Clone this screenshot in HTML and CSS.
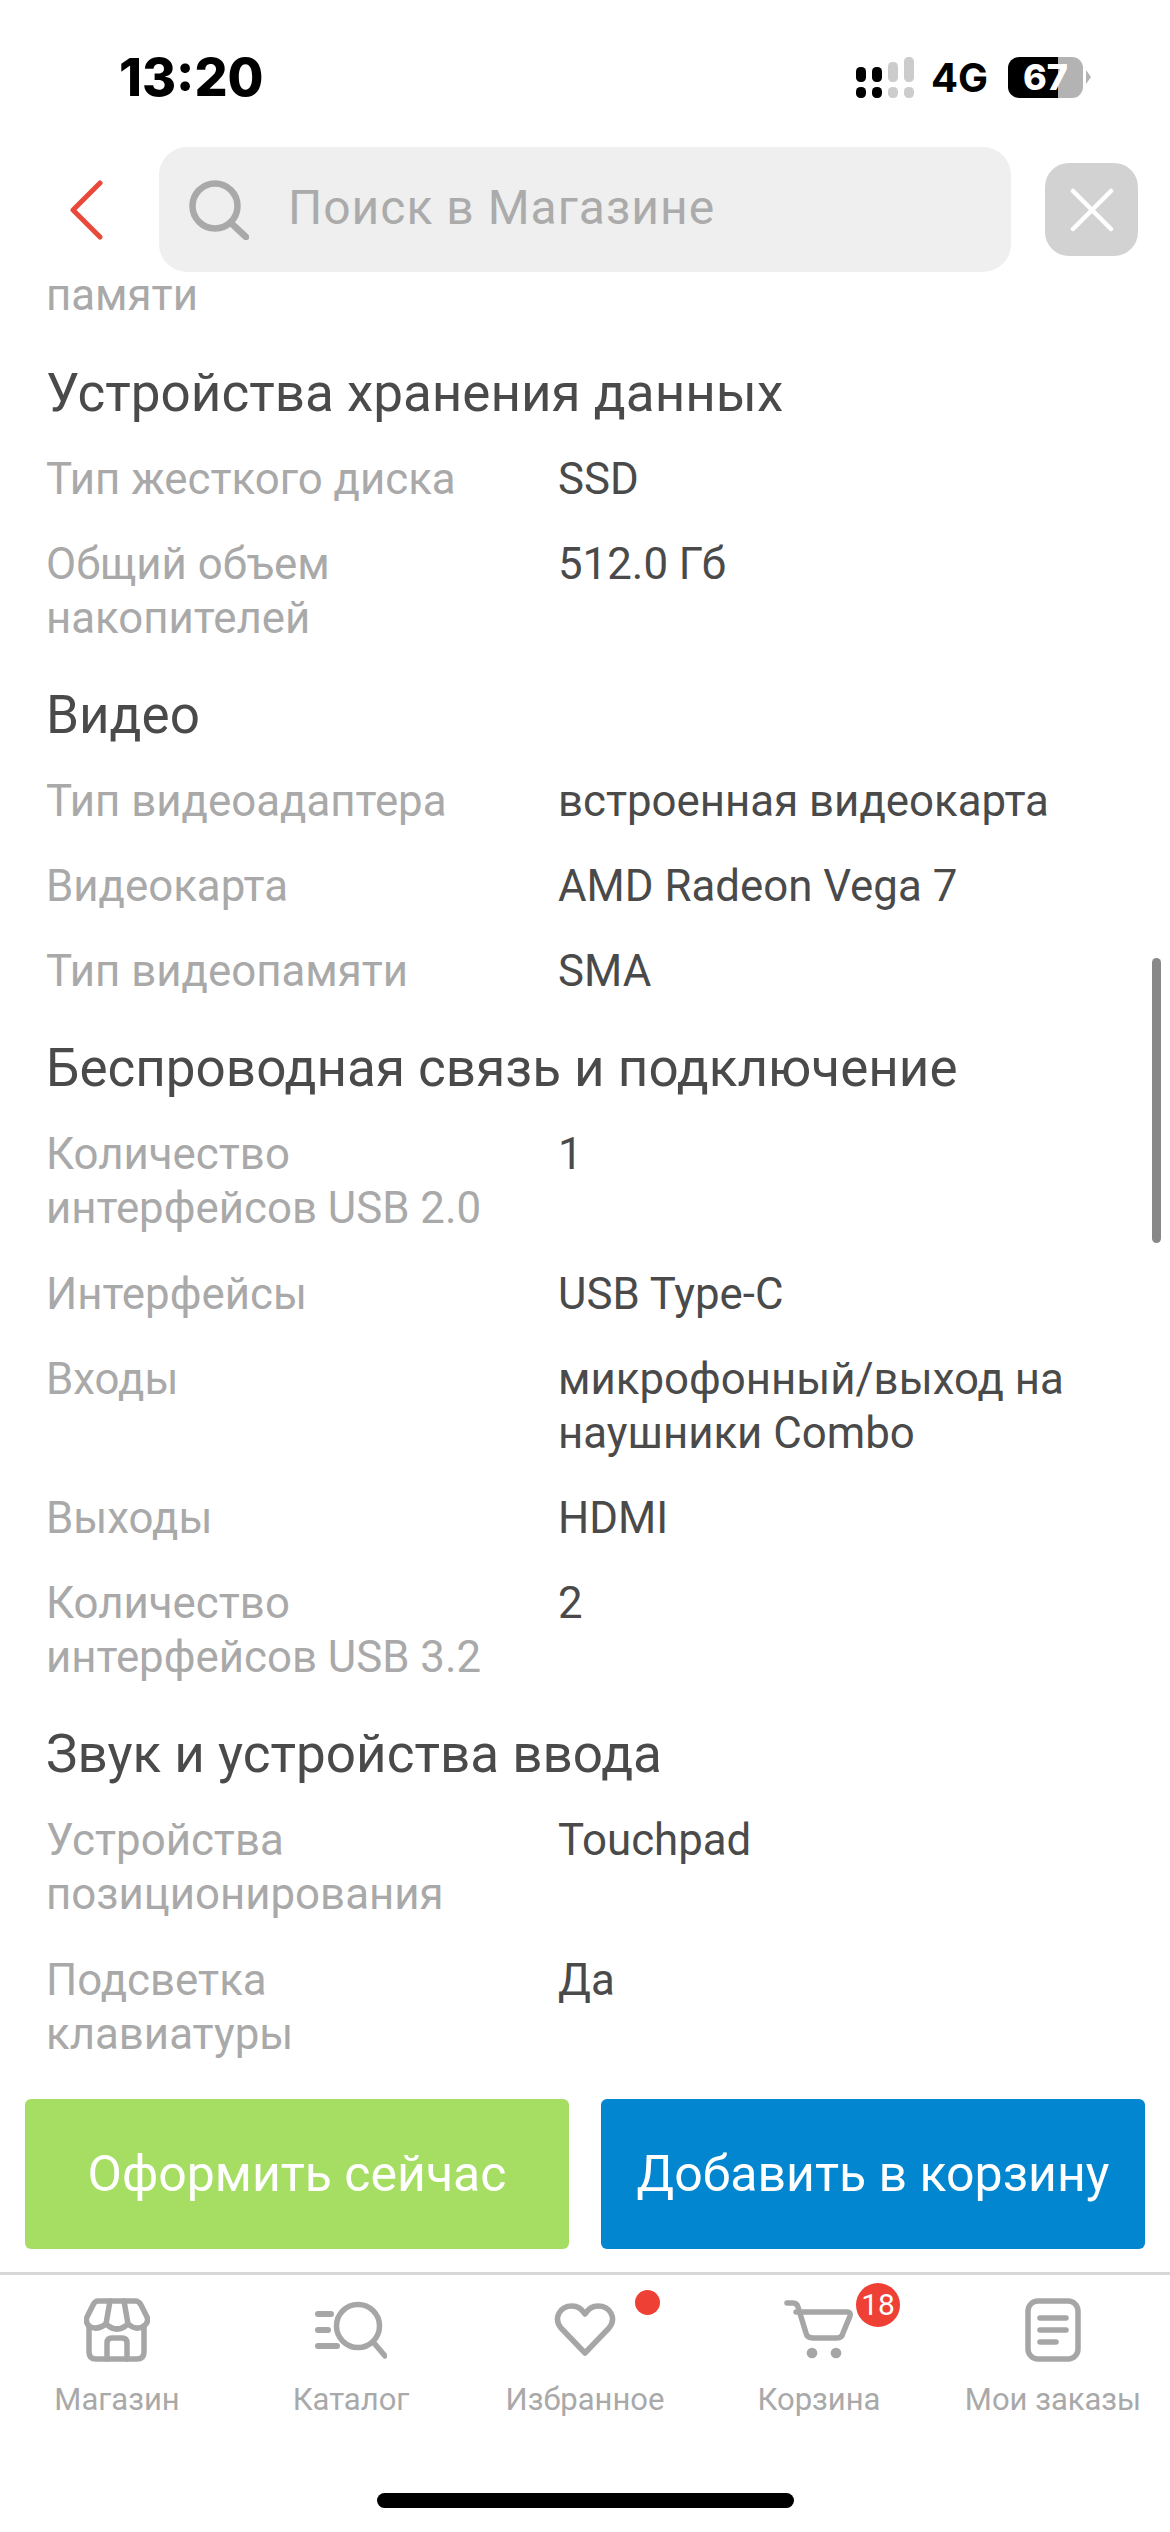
FILE: index.html
```html
<!DOCTYPE html>
<html lang="ru">
<head>
<meta charset="utf-8">
<title>Характеристики</title>
<link rel="stylesheet" href="styles.css">
</head>
<body>
<div class="phone">
  <header class="top">
    <div class="status">
      <span class="time">13:20</span>
      <div class="status-right">
        <svg class="signal" width="58" height="41" viewBox="0 0 58 41">
          <rect x="0" y="10" width="10" height="15" rx="4.5" fill="#000"/>
          <rect x="16" y="10" width="10" height="15" rx="4.5" fill="#000"/>
          <rect x="32" y="5" width="10" height="20" rx="4.5" fill="#ccc"/>
          <rect x="48" y="0" width="10" height="25" rx="4.5" fill="#ccc"/>
          <rect x="0" y="30" width="10" height="11" rx="4.5" fill="#000"/>
          <rect x="16" y="30" width="10" height="11" rx="4.5" fill="#000"/>
          <rect x="32" y="30" width="10" height="11" rx="4.5" fill="#ccc"/>
          <rect x="48" y="30" width="10" height="11" rx="4.5" fill="#ccc"/>
        </svg>
        <span class="net">4G</span>
        <div class="battery"><span class="battery-num">67</span></div>
        <span class="battery-tip"></span>
      </div>
    </div>
    <div class="searchbar">
      <svg class="back" width="34" height="60" viewBox="0 0 34 60"><path d="M31 3 L4 30 L31 57" fill="none" stroke="#e8493a" stroke-width="5" stroke-linecap="round" stroke-linejoin="round"/></svg>
      <div class="search">
        <svg class="search-icon" width="60" height="60" viewBox="0 0 60 60"><circle cx="26" cy="26" r="22.5" fill="none" stroke="#a9a9a9" stroke-width="6.5"/><path d="M42 43 L57 57" fill="none" stroke="#a9a9a9" stroke-width="6.5" stroke-linecap="round"/></svg>
        <span class="search-text">Поиск в Магазине</span>
      </div>
      <div class="close">
        <svg width="44" height="44" viewBox="0 0 44 44"><path d="M3 3 L41 41 M41 3 L3 41" fill="none" stroke="#fff" stroke-width="4.5" stroke-linecap="round"/></svg>
      </div>
    </div>
  </header>

  <main class="specs">
    <div class="rows first"><span class="label">памяти</span><span class="value"></span></div>
    <h2 class="heading">Устройства хранения данных</h2>
    <div class="rows"><span class="label">Тип жесткого диска</span><span class="value">SSD</span></div>
    <div class="rows"><span class="label">Общий объем накопителей</span><span class="value">512.0 Гб</span></div>
    <h2 class="heading">Видео</h2>
    <div class="rows"><span class="label">Тип видеоадаптера</span><span class="value">встроенная видеокарта</span></div>
    <div class="rows"><span class="label">Видеокарта</span><span class="value">AMD Radeon Vega 7</span></div>
    <div class="rows"><span class="label">Тип видеопамяти</span><span class="value">SMA</span></div>
    <h2 class="heading">Беспроводная связь и подключение</h2>
    <div class="rows"><span class="label">Количество интерфейсов USB 2.0</span><span class="value">1</span></div>
    <div class="rows"><span class="label">Интерфейсы</span><span class="value">USB Type-C</span></div>
    <div class="rows"><span class="label">Входы</span><span class="value">микрофонный/выход на наушники Combo</span></div>
    <div class="rows"><span class="label">Выходы</span><span class="value">HDMI</span></div>
    <div class="rows"><span class="label">Количество интерфейсов USB 3.2</span><span class="value">2</span></div>
    <h2 class="heading">Звук и устройства ввода</h2>
    <div class="rows"><span class="label">Устройства позиционирования</span><span class="value">Touchpad</span></div>
    <div class="rows"><span class="label">Подсветка клавиатуры</span><span class="value">Да</span></div>
    <div class="scrollbar"></div>
  </main>

  <div class="actions">
    <button class="btn btn-green">Оформить сейчас</button>
    <button class="btn btn-blue">Добавить в корзину</button>
  </div>

  <nav class="tabs">
    <div class="tab">
      <svg width="66" height="64" viewBox="0 0 66 64" fill="none" stroke="#a6a6a6" stroke-width="5.5" stroke-linejoin="round" stroke-linecap="round">
        <path d="M5 28 V54 Q5 61 12 61 H53 Q60 61 60 54 V28"/>
        <path d="M14 3 H51 Q55 3 57 7 L63 19 Q65 24 60 28 Q52 33 44 26 Q33 36 22 26 Q13 33 5 28 Q1 24 3 19 L9 7 Q11 3 14 3 Z"/>
        <path d="M22 26 L26 3 M44 26 L40 3"/>
        <path d="M23 61 V45 Q23 40 28 40 H38 Q43 40 43 45 V61"/>
      </svg>
      <span class="tab-label">Магазин</span>
    </div>
    <div class="tab">
      <svg width="72" height="60" viewBox="0 0 72 60" fill="none" stroke="#a6a6a6" stroke-linecap="round">
        <circle cx="43" cy="26" r="21.5" stroke-width="5.5"/>
        <path d="M59 43 L70 56" stroke-width="5.5"/>
        <path d="M3 14 H16 M3 30 H13 M3 46 H22" stroke-width="6"/>
      </svg>
      <span class="tab-label">Каталог</span>
    </div>
    <div class="tab">
      <svg width="62" height="54" viewBox="0 0 62 54" fill="none" stroke="#a6a6a6" stroke-width="5.5" stroke-linejoin="round">
        <path d="M31 50 L7 25 C-1 15 6 3 18 3 C24 3 28 6 31 11 C34 6 38 3 44 3 C56 3 63 15 55 25 Z"/>
      </svg>
      <span class="tab-label">Избранное</span>
      <span class="dot"></span>
    </div>
    <div class="tab">
      <svg width="70" height="60" viewBox="0 0 70 60" fill="none" stroke="#a6a6a6" stroke-width="5.5" stroke-linecap="round" stroke-linejoin="round">
        <path d="M3 3 H9 Q13 3 14 7 L22 33 Q23 38 29 38 H53 Q58 38 59 33 L66 16 Q67 12 63 12 H12"/>
        <circle cx="28" cy="53" r="2.6" fill="#a6a6a6"/>
        <circle cx="52" cy="53" r="2.6" fill="#a6a6a6"/>
      </svg>
      <span class="tab-label">Корзина</span>
      <span class="count">18</span>
    </div>
    <div class="tab">
      <svg width="56" height="64" viewBox="0 0 56 64" fill="none" stroke="#a6a6a6" stroke-linecap="round">
        <rect x="3" y="3" width="50" height="58" rx="10" stroke-width="5.5"/>
        <path d="M15 20 H41 M15 32 H41 M15 44 H31" stroke-width="5.5"/>
      </svg>
      <span class="tab-label">Мои заказы</span>
    </div>
  </nav>
  <div class="home-wrap"><div class="home"></div></div>
</div>
</body>
</html>
```
FILE: styles.css
```css
* { box-sizing: border-box; }
html, body { margin: 0; padding: 0; background: #fff; }
body { font-family: Roboto, "Noto Sans", sans-serif; }
.phone { width: 1170px; height: 2532px; display: flex; flex-direction: column; overflow: hidden; background: #fff; }

.top { height: 272px; flex: none; }
.status { height: 147px; display: flex; justify-content: space-between; padding: 57px 79px 0 119px; }
.time { font-family: Inter, Roboto, sans-serif; font-size: 52px; font-weight: 800; line-height: 42px; color: #000; }
.status-right { display: flex; align-items: flex-start; height: 41px; }
.signal { margin-right: 17px; }
.net { font-family: Inter, Roboto, sans-serif; font-size: 40px; font-weight: 700; line-height: 41px; color: #000; margin-right: 20px; }
.battery { width: 75px; height: 41px; border-radius: 11px; background: linear-gradient(90deg, #000 0 50px, #b3b3b3 50px); display: flex; align-items: center; justify-content: center; }
.battery-num { font-family: Inter, Roboto, sans-serif; font-size: 36px; font-weight: 800; color: #fff; line-height: 41px; }
.battery-tip { width: 0; height: 0; margin: 13px 0 0 3px; border-left: 5px solid #b3b3b3; border-top: 7px solid transparent; border-bottom: 7px solid transparent; }

.searchbar { height: 125px; display: flex; align-items: center; padding-left: 69px; }
.back { margin-right: 56px; flex: none; }
.search { width: 852px; height: 125px; flex: none; background: #efefef; border-radius: 28px; display: flex; align-items: center; padding-left: 30px; }
.search-icon { flex: none; margin-right: 39px; }
.search-text { font-size: 48px; color: #ababab; letter-spacing: 1px; padding-bottom: 5px; }
.close { width: 93px; height: 93px; flex: none; margin-left: 34px; background: #d2d2d2; border-radius: 24px; display: flex; align-items: center; justify-content: center; }

.specs { position: relative; flex: 1; min-height: 0; padding: 0 0 0 46px; }
.heading { margin: 25px 0 13px; padding: 0; font-size: 53px; font-weight: 400; line-height: 60px; color: #4a4a4a; }
.rows { display: grid; grid-template-columns: 470px 580px; column-gap: 42px; font-size: 43.8px; line-height: 54px; padding: 16px 0 15.2px; }
.first { line-height: 46px; padding: 0 0 19.5px; }
.label { color: #a9a9a9; }
.value { color: #4a4a4a; }
.scrollbar { position: absolute; top: 686px; right: 9px; width: 9px; height: 285px; border-radius: 4.5px; background: #888; }

.actions { flex: none; display: flex; justify-content: space-between; padding: 0 25px; height: 173px; }
.btn { width: 544px; height: 150px; border: 0; border-radius: 6px; font-family: inherit; font-size: 50px; color: #fff; padding: 0; }
.btn-green { background: #a5de63; }
.btn-blue { background: #0386d0; }

.tabs { flex: none; height: 190px; border-top: 3px solid #d8d8d8; display: grid; grid-template-columns: repeat(5, 1fr); }
.tab { position: relative; display: flex; flex-direction: column; align-items: center; padding-top: 23px; }
.tab svg { display: block; height: 64px; }
.tab-label { margin-top: 18px; font-size: 31px; line-height: 40px; color: #a9a9a9; white-space: nowrap; }
.dot { position: absolute; top: 15px; left: 167px; width: 25px; height: 25px; border-radius: 50%; background: #ee4035; }
.count { position: absolute; top: 8px; left: 154px; width: 44px; height: 44px; border-radius: 50%; background: #ee4035; color: #fff; font-size: 30px; line-height: 44px; text-align: center; }

.home-wrap { flex: none; height: 70px; display: flex; justify-content: center; padding-top: 31px; }
.home { width: 417px; height: 15px; border-radius: 8px; background: #000; }
```
